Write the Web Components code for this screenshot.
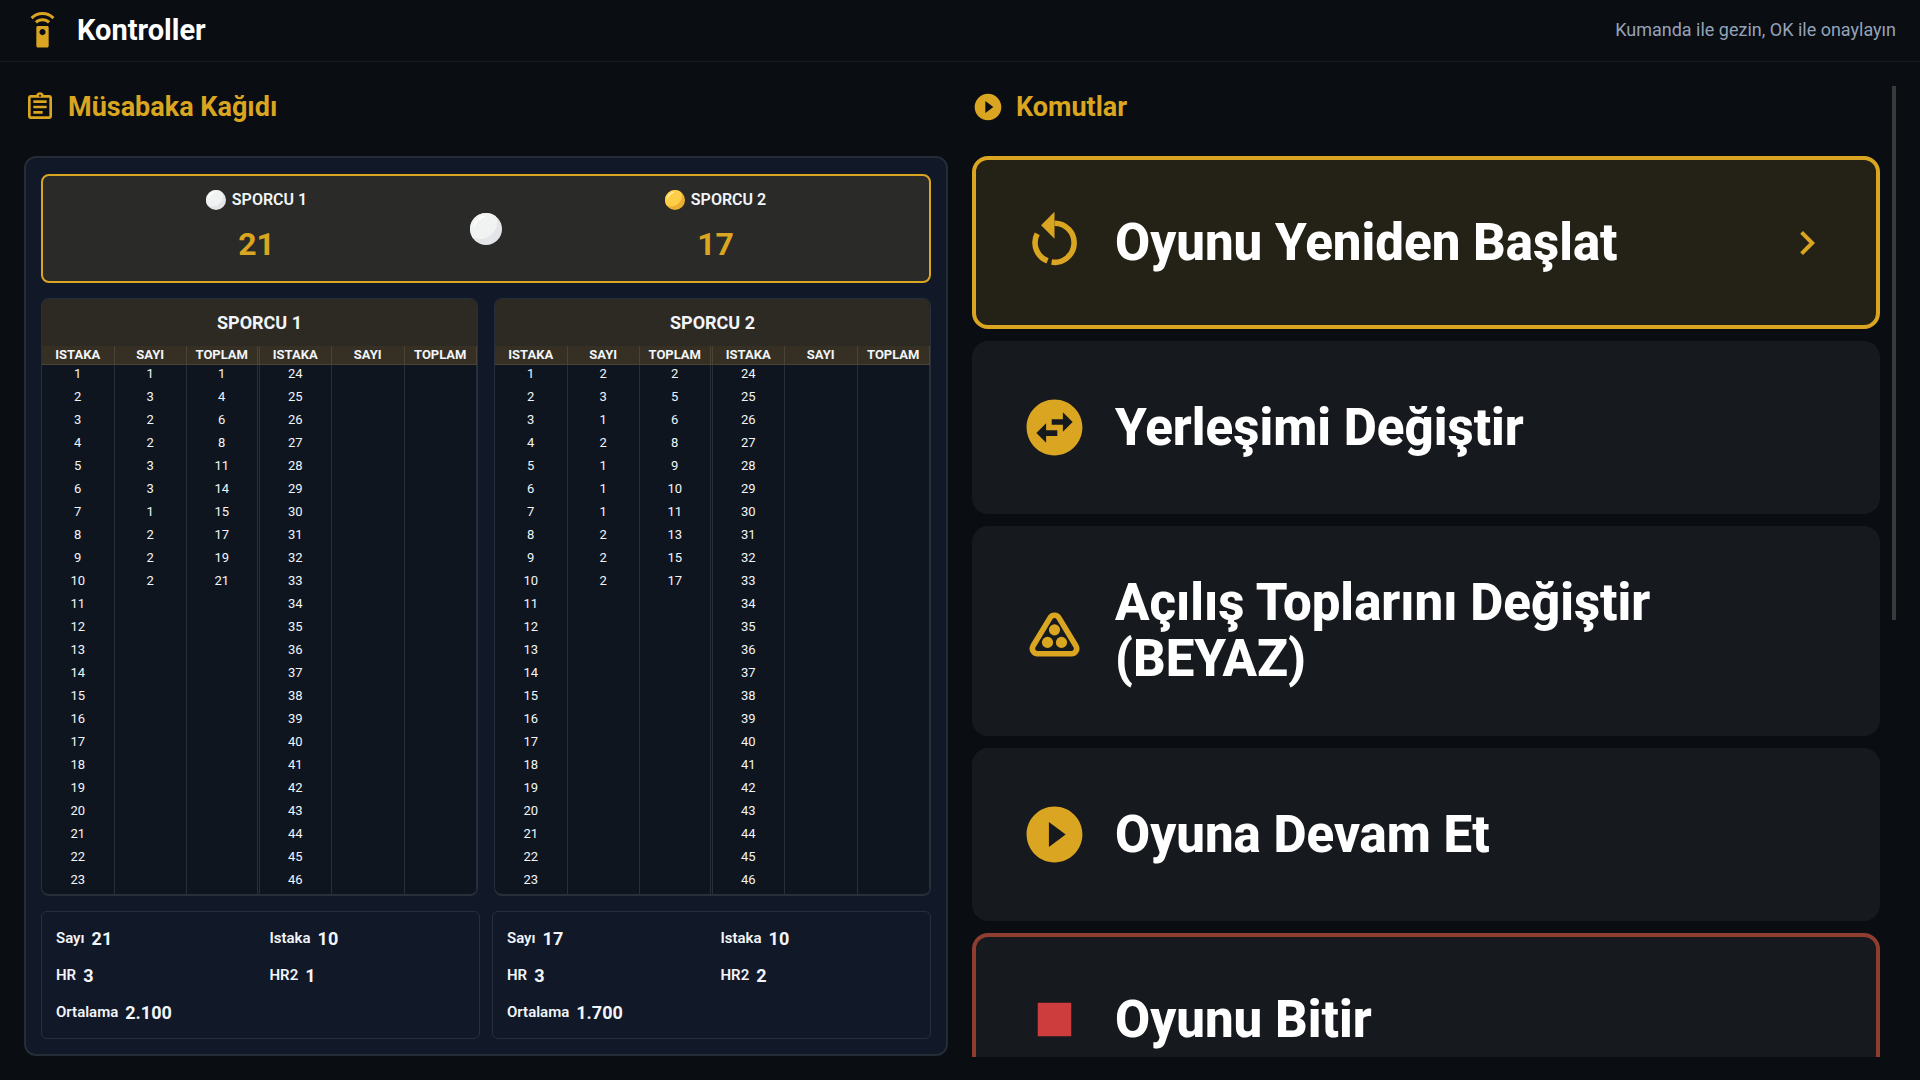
<!DOCTYPE html>
<html lang="tr">
<head>
<meta charset="utf-8">
<title>Kontroller</title>
<style>
  :root {
    --gold: #daa520;
    --text: #f1f5f9;
    --line: #292f3a;
    --danger: #8f3d30;
  }
  html, body { height: 100%; }
  body {
    margin: 0;
    background: #0a0d12;
    color: var(--text);
    font-family: Roboto, "Liberation Sans", sans-serif;
    overflow: hidden;
  }
</style>
</head>
<body>
<control-page></control-page>

<script>
const ICONS = {
  remote: '<path d="M15 9H9c-.55 0-1 .45-1 1v12c0 .55.45 1 1 1h6c.55 0 1-.45 1-1V10c0-.55-.45-1-1-1zm-3 6c-1.1 0-2-.9-2-2s.9-2 2-2 2 .9 2 2-.9 2-2 2zM7.05 6.05l1.41 1.41C9.37 6.56 10.62 6 12 6s2.63.56 3.54 1.46l1.41-1.41C15.68 4.78 13.93 4 12 4s-3.68.78-4.95 2.05zM12 0C8.96 0 6.21 1.23 4.22 3.22l1.41 1.41C7.26 3.01 9.51 2 12 2s4.74 1.01 6.36 2.64l1.41-1.41C17.79 1.23 15.04 0 12 0z"/>',
  sheet: '<path d="M7 15h7v2H7zm0-4h10v2H7zm0-4h10v2H7zm12-4h-4.18C14.4 1.84 13.3 1 12 1s-2.4.84-2.82 2H5c-1.1 0-2 .9-2 2v14c0 1.1.9 2 2 2h14c1.1 0 2-.9 2-2V5c0-1.1-.9-2-2-2zm-7-.25c.41 0 .75.34.75.75s-.34.75-.75.75-.75-.34-.75-.75.34-.75.75-.75zM19 19H5V5h14v14z"/>',
  play: '<path d="M12 2C6.48 2 2 6.48 2 12s4.48 10 10 10 10-4.48 10-10S17.52 2 12 2zm-2 14.5v-9l6 4.5-6 4.5z"/>',
  restart: '<path d="M12 5.1a7 7 0 1 1-1.03 13.92M9.5 18.6A7 7 0 0 1 5.8 8.9" fill="none" stroke="currentColor" stroke-width="2"/><path d="M12 1v9.7L7.2 5.85z"/>',
  swap: '<path d="M22 12c0-5.52-4.48-10-10-10S2 6.48 2 12s4.48 10 10 10 10-4.48 10-10zm-7-5.5l3.5 3.5-3.5 3.5V11h-4V9h4V6.5zm-6 11L5.5 14 9 10.5V13h4v2H9v2.5z"/>',
  rack: '<path d="M10.4 7.1a1.85 1.85 0 0 1 3.2 0l6.1 10.1a1.85 1.85 0 0 1-1.6 2.75H5.9a1.85 1.85 0 0 1-1.6-2.75z" fill="none" stroke="currentColor" stroke-width="2"/><circle cx="12" cy="11.4" r="2"/><circle cx="9.5" cy="15.9" r="2"/><circle cx="14.5" cy="15.9" r="2"/>',
  stop: '<path d="M6 6h12v12H6z"/>',
  chevron: '<path d="M10 6L8.59 7.41 13.17 12l-4.58 4.59L10 18l6-6z"/>'
};

const PLAYERS = [
  { name: 'SPORCU 1', ball: 'white', score: 21, innings: [1, 3, 2, 2, 3, 3, 1, 2, 2, 2], hr: 3, hr2: 1, avg: '2.100' },
  { name: 'SPORCU 2', ball: 'yellow', score: 17, innings: [2, 3, 1, 2, 1, 1, 1, 2, 2, 2], hr: 3, hr2: 2, avg: '1.700' }
];

// Icon, sized by --icon-size
class UiIcon extends HTMLElement {
  connectedCallback() {
    this.attachShadow({ mode: 'open' }).innerHTML = `
      <style>
        :host { display: block; flex: none; width: var(--icon-size, 32px); height: var(--icon-size, 32px); }
        svg { display: block; width: 100%; height: 100%; fill: currentColor; }
      </style>
      <svg viewBox="0 0 24 24" aria-hidden="true">${ICONS[this.getAttribute('name')]}</svg>
    `;
  }
}
customElements.define('ui-icon', UiIcon);

class CueBall extends HTMLElement {
  connectedCallback() {
    const yellow = this.getAttribute('color') === 'yellow';
    const [base, shade, shine] = yellow
      ? ['#ffce48', '#eab02f', '#fff1bd']
      : ['#f1f2f2', '#e4e5e8', '#ffffff'];
    this.attachShadow({ mode: 'open' }).innerHTML = `
      <style>
        :host { display: block; flex: none; width: var(--ball-size, 20px); height: var(--ball-size, 20px); }
        svg { display: block; width: 100%; height: 100%; }
      </style>
      <svg viewBox="0 0 32 32" aria-hidden="true">
        <circle cx="16" cy="16" r="16" fill="${shade}"/>
        <path d="M25.5 3.1A16 16 0 0 0 2.6 24.7C7 27 15 27 21 22 27 17 29 9 25.5 3.1z" fill="${base}"/>
        <path d="M3.5 12.5C5 7.5 8.5 4 13.5 2.5c1.5-.3 1.5 1 0 2C10 6 7 8.5 4.8 12.3c-.8 1.3-1.7 1.2-1.3.2z" fill="${shine}"/>
      </svg>
    `;
  }
}
customElements.define('cue-ball', CueBall);

class PageHeader extends HTMLElement {
  connectedCallback() {
    this.attachShadow({ mode: 'open' }).innerHTML = `
      <style>
        :host { display: block; }
        header {
          display: flex;
          align-items: center;
          gap: 16px;
          padding: 10px 24px 11px;
          border-bottom: 1px solid #171a1f;
          --icon-size: 37px;
        }
        ui-icon { color: var(--gold); }
        h1 { flex: 1; margin: 0; font-size: 29px; line-height: 40px; font-weight: 700; color: #fff; }
        p { margin: 0; font-size: 18px; line-height: 24px; color: #94a3b8; }
      </style>
      <header>
        <ui-icon name="remote"></ui-icon>
        <h1><slot></slot></h1>
        <p><slot name="hint"></slot></p>
      </header>
    `;
  }
}
customElements.define('page-header', PageHeader);

class SectionTitle extends HTMLElement {
  connectedCallback() {
    this.attachShadow({ mode: 'open' }).innerHTML = `
      <style>
        :host { display: block; --icon-size: 32px; }
        h2 {
          display: flex;
          align-items: center;
          gap: 12px;
          margin: 0;
          font-size: 27px;
          line-height: 42px;
          font-weight: 700;
          color: var(--gold);
        }
      </style>
      <h2><ui-icon name="${this.getAttribute('icon')}"></ui-icon><slot></slot></h2>
    `;
  }
}
customElements.define('section-title', SectionTitle);

class ScoreBoard extends HTMLElement {
  connectedCallback() {
    const [a, b] = PLAYERS.map((p) => `
      <div class="player">
        <div class="name"><cue-ball color="${p.ball}"></cue-ball>${p.name}</div>
        <div class="score">${p.score}</div>
      </div>`);
    this.attachShadow({ mode: 'open' }).innerHTML = `
      <style>
        :host {
          display: flex;
          align-items: center;
          box-sizing: border-box;
          border: 2px solid var(--gold);
          border-radius: 8px;
          background: #2a2a28;
        }
        .player { flex: 1; padding: 10px 0 19px; }
        .name {
          display: flex;
          align-items: center;
          justify-content: center;
          gap: 6px;
          font-size: 16px;
          line-height: 28px;
          font-weight: 600;
        }
        .score { padding-top: 12px; text-align: center; font-size: 32px; line-height: 36px; font-weight: 700; color: var(--gold); }
        .turn { --ball-size: 32px; }
      </style>
      ${a}<cue-ball class="turn" color="white"></cue-ball>${b}
    `;
  }
}
customElements.define('score-board', ScoreBoard);

class InningsTable extends HTMLElement {
  connectedCallback() {
    const player = PLAYERS[this.getAttribute('player')];
    const half = 23;
    let total = 0;
    let rows = '';
    for (let i = 0; i < half; i++) {
      const points = player.innings[i];
      total += points || 0;
      const cells = points === undefined ? ['', ''] : [points, total];
      rows += `<tr><td>${i + 1}</td><td>${cells[0]}</td><td>${cells[1]}</td><td>${i + 1 + half}</td><td></td><td></td></tr>`;
    }
    const heads = ['ISTAKA', 'SAYI', 'TOPLAM'].map((t) => `<th scope="col">${t}</th>`).join('');
    this.attachShadow({ mode: 'open' }).innerHTML = `
      <style>
        :host {
          display: block;
          box-sizing: border-box;
          border: 1px solid var(--line);
          border-bottom-width: 2px;
          border-radius: 8px;
          background: #0f151f;
          overflow: hidden;
        }
        table { width: 100%; table-layout: fixed; border-spacing: 0; border-collapse: separate; }
        caption { background: #2d2a23; font-size: 18px; line-height: 47px; font-weight: 700; }
        th, td { padding: 0; text-align: center; vertical-align: top; border-right: 1px solid var(--line); }
        th { height: 18px; font-size: 13px; line-height: 17px; font-weight: 700; background: #353023; border-color: #494433; border-bottom: 1px solid #494433; }
        td { height: 23px; font-size: 13px; line-height: 18px; }
        :is(th, td):nth-child(3) { border-right: 3px double var(--line); }
        th:nth-child(3) { border-right-color: #494433; }
      </style>
      <table>
        <caption>${player.name}</caption>
        <thead><tr>${heads}${heads}</tr></thead>
        <tbody>${rows}</tbody>
      </table>
    `;
  }
}
customElements.define('innings-table', InningsTable);

class PlayerStats extends HTMLElement {
  connectedCallback() {
    const p = PLAYERS[this.getAttribute('player')];
    const stats = [['Sayı', p.score], ['Istaka', p.innings.length], ['HR', p.hr], ['HR2', p.hr2], ['Ortalama', p.avg]];
    this.attachShadow({ mode: 'open' }).innerHTML = `
      <style>
        :host {
          display: block;
          box-sizing: border-box;
          padding: 8px 0 7px 14px;
          border: 1px solid var(--line);
          border-radius: 6px;
        }
        dl { display: grid; grid-template-columns: 1fr 1fr; column-gap: 4px; margin: 0; }
        div { display: flex; align-items: center; gap: 7px; line-height: 37px; }
        dt { font-size: 15px; font-weight: 600; }
        dd { margin: 0; font-size: 18px; font-weight: 700; }
      </style>
      <dl>${stats.map(([k, v]) => `<div><dt>${k}</dt><dd>${v}</dd></div>`).join('')}</dl>
    `;
  }
}
customElements.define('player-stats', PlayerStats);

class ScoreSheet extends HTMLElement {
  connectedCallback() {
    this.attachShadow({ mode: 'open' }).innerHTML = `
      <style>
        :host {
          display: flex;
          flex-direction: column;
          gap: 15px;
          box-sizing: border-box;
          padding: 16px 15px 15px;
          border: 2px solid #252c38;
          border-radius: 12px;
          background: #111827;
        }
        .tables, .stats { display: grid; grid-template-columns: 1fr 1fr; }
        .tables { gap: 16px; }
        .stats { gap: 12px; }
      </style>
      <score-board></score-board>
      <div class="tables">
        <innings-table player="0"></innings-table>
        <innings-table player="1"></innings-table>
      </div>
      <div class="stats">
        <player-stats player="0"></player-stats>
        <player-stats player="1"></player-stats>
      </div>
    `;
  }
}
customElements.define('score-sheet', ScoreSheet);

class CommandButton extends HTMLElement {
  connectedCallback() {
    this.attachShadow({ mode: 'open' }).innerHTML = `
      <style>
        :host { display: block; }
        button {
          display: flex;
          align-items: center;
          gap: 27px;
          box-sizing: border-box;
          width: 100%;
          min-height: 173px;
          margin: 0;
          padding: 45px;
          border: 4px solid transparent;
          border-radius: 16px;
          background: #16191e;
          color: #fff;
          font: 800 51px/56px Roboto, "Liberation Sans", sans-serif;
          text-align: left;
          cursor: pointer;
        }
        span { flex: 1; }
        .lead { color: var(--gold); --icon-size: 67px; }
        .arrow { color: var(--gold); --icon-size: 48px; visibility: hidden; }
        :host([selected]) button { border-color: var(--gold); background: #242117; }
        :host([selected]) .arrow { visibility: visible; }
        :host([danger]) button { border-color: var(--danger); }
        :host([danger]) .lead { color: #cd3d3e; }
        button:focus { outline: none; }
      </style>
      <button type="button">
        <ui-icon class="lead" name="${this.getAttribute('icon')}"></ui-icon>
        <span><slot></slot></span>
        <ui-icon class="arrow" name="chevron"></ui-icon>
      </button>
    `;
  }
}
customElements.define('command-button', CommandButton);

class CommandPanel extends HTMLElement {
  connectedCallback() {
    this.attachShadow({ mode: 'open' }).innerHTML = `
      <style>
        :host { display: flex; gap: 12px; min-height: 0; }
        .panel { flex: 1; min-width: 0; display: flex; flex-direction: column; gap: 28px; }
        .list { flex: 1; min-height: 0; overflow: hidden; display: flex; flex-direction: column; gap: 12px; }
        .list > * { flex: none; }
        .track { width: 4px; }
        .thumb { height: 55%; background: #3b3a3b; }
      </style>
      <div class="panel">
        <section-title icon="play">Komutlar</section-title>
        <div class="list">
          <command-button icon="restart" selected>Oyunu Yeniden Başlat</command-button>
          <command-button icon="swap">Yerleşimi Değiştir</command-button>
          <command-button icon="rack">Açılış Toplarını Değiştir (BEYAZ)</command-button>
          <command-button icon="play">Oyuna Devam Et</command-button>
          <command-button icon="stop" danger>Oyunu Bitir</command-button>
        </div>
      </div>
      <div class="track"><div class="thumb"></div></div>
    `;
  }
}
customElements.define('command-panel', CommandPanel);

class ControlPage extends HTMLElement {
  connectedCallback() {
    this.attachShadow({ mode: 'open' }).innerHTML = `
      <style>
        :host { display: flex; flex-direction: column; height: 100vh; }
        main {
          flex: 1;
          min-height: 0;
          display: grid;
          grid-template-columns: 1fr 1fr;
          gap: 24px;
          padding: 24px 24px 23px;
        }
        .sheet { display: flex; flex-direction: column; gap: 28px; min-width: 0; }
      </style>
      <page-header>Kontroller<span slot="hint">Kumanda ile gezin, OK ile onaylayın</span></page-header>
      <main>
        <section class="sheet">
          <section-title icon="sheet">Müsabaka Kağıdı</section-title>
          <score-sheet></score-sheet>
        </section>
        <command-panel></command-panel>
      </main>
    `;
  }
}
customElements.define('control-page', ControlPage);
</script>
</body>
</html>
